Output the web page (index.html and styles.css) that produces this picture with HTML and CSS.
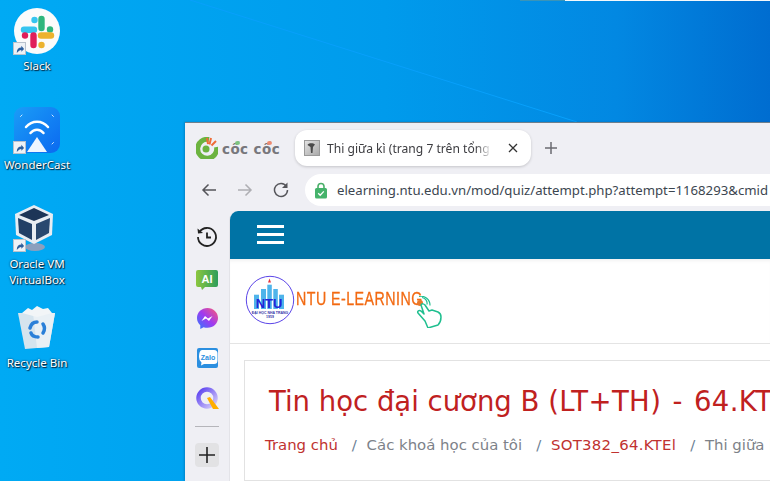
FILE: index.html
```html
<!DOCTYPE html>
<html lang="vi">
<head>
<meta charset="utf-8">
<title>Desktop</title>
<link rel="stylesheet" href="styles.css">
</head>
<body>
<div class="desktop">
  <svg class="rays" viewBox="0 0 770 481" aria-hidden="true">
    <defs>
      <linearGradient id="sky" x1="0" y1="0" x2="1" y2="0">
        <stop offset="0" stop-color="#00aaf4"/><stop offset="0.5" stop-color="#009bec"/><stop offset="0.8" stop-color="#0288e2"/><stop offset="1" stop-color="#006dd0"/>
      </linearGradient>
    </defs>
    <rect width="770" height="481" fill="url(#sky)"/>
    <line x1="190" y1="0" x2="577" y2="122" stroke="#08a0fb" stroke-width="1"/>
    <rect x="520" y="0" width="45" height="1" fill="#3a94b8"/>
    <rect x="565" y="0" width="205" height="1" fill="#f4f8fb"/>
  </svg>

  <div class="icon icon-slack">
    <svg width="46" height="46" viewBox="0 0 46 46">
      <circle cx="23" cy="23" r="23" fill="#fbfbfb"/>
      <g stroke-width="6.400" stroke-linecap="round" fill="none">
        <path d="M10 21.800H20" stroke="#36c5f0"/><path d="M20.500 12v.1" stroke="#36c5f0"/>
        <path d="M27.500 11V20" stroke="#2eb67d"/><path d="M36 21.500v.1" stroke="#2eb67d"/>
        <path d="M27 27.500H37" stroke="#ecb22e"/><path d="M27.500 37v.1" stroke="#ecb22e"/>
        <path d="M19.500 27.500V37" stroke="#e01e5a"/><path d="M11 27.500v.1" stroke="#e01e5a"/>
      </g>
    </svg>
    <span class="shortcut"><svg viewBox="0 0 12 12"><path d="M3 11C3 7 5 5 8 5V3l3 3.500-3 3V7.500C6 7.500 4.500 9 3 11Z" fill="#2d5f9e"/></svg></span>
    <span class="label">Slack</span>
  </div>

  <div class="icon icon-wonder">
    <svg width="46" height="46" viewBox="0 0 46 46">
      <defs><linearGradient id="wc" x1="0" y1="0" x2="1" y2="1"><stop offset="0" stop-color="#1a9df7"/><stop offset="1" stop-color="#0b69f0"/></linearGradient></defs>
      <rect width="46" height="46" rx="9" fill="url(#wc)"/>
      <g fill="none" stroke="#fff" stroke-linecap="round">
        <path d="M12 20C18 13 28 13 34 20" stroke-width="2.500"/>
        <path d="M16.500 26C20 21.500 26 21.500 29.500 26" stroke-width="2.500"/>
        <path d="M8 8l-1.500 1.500M38 8l1.500 1.500M38 37l1.500-1.500" stroke-width="1" opacity=".8"/>
      </g>
      <polygon points="23,30 13,45 33,45" fill="#eef6ff"/>
    </svg>
    <span class="shortcut"><svg viewBox="0 0 12 12"><path d="M3 11C3 7 5 5 8 5V3l3 3.500-3 3V7.500C6 7.500 4.500 9 3 11Z" fill="#2d5f9e"/></svg></span>
    <span class="label">WonderCast</span>
  </div>

  <div class="icon icon-vbox">
    <svg class="vbox-art" width="40" height="46" viewBox="0 0 40 46">
      <ellipse cx="21" cy="42" rx="10" ry="4" fill="#8c9fbd"/>
      <polygon points="20,0 39,9 38,30 20,39 2,30 1,9" fill="#e8edf3"/>
      <polygon points="20,3 35,10 20,16 5,10" fill="#1d3557"/>
      <polygon points="4,13 18,19 18,35 5,28" fill="#223f66"/>
      <polygon points="22,19 36,13 35,28 22,35" fill="#29486f"/>
    </svg>
    <span class="shortcut"><svg viewBox="0 0 12 12"><path d="M3 11C3 7 5 5 8 5V3l3 3.500-3 3V7.500C6 7.500 4.500 9 3 11Z" fill="#2d5f9e"/></svg></span>
    <span class="label">Oracle VM<br>VirtualBox</span>
  </div>

  <div class="icon icon-bin">
    <svg width="40" height="44" viewBox="0 0 40 44">
      <polygon points="1,8 38,8 32,42 8,44" fill="#d5e4ee"/>
      <polygon points="16,8 38,8 32,42 20,43" fill="#e9f0f5"/>
      <path d="M5 8L11 3 15 5 20 1 26 4 31 3 35 8 20 12Z" fill="#f2f5f7"/>
      <g fill="none" stroke="#2a7fd8" stroke-width="3.500" stroke-linecap="round">
        <path d="M13 23C14 19 17 17 20 17"/><path d="M26 19C28 22 28 25 26 28"/><path d="M21 32C18 32 15 31 14 28"/>
      </g>
    </svg>
    <span class="label">Recycle Bin</span>
  </div>

  <section class="browser">
    <header class="tabstrip">
      <div class="brand">
        <svg width="22" height="22" viewBox="0 0 22 22">
          <path d="M13 2.500A9.500 9.500 0 1 0 20.500 10" fill="none" stroke="#6cb33f" stroke-width="5"/>
          <circle cx="10" cy="12" r="3.500" fill="#6cb33f"/>
          <path d="M11 1l1 6M15 1l-1.500 6.500M20 4l-4.500 4.500" stroke="#ef6b36" stroke-width="2"/>
        </svg>
        <span class="brand-name">cốc cốc<i class="mark mark-green"></i><i class="mark mark-red"></i></span>
      </div>
      <div class="tab">
        <svg class="favicon" width="16" height="16" viewBox="0 0 16 16">
          <defs><linearGradient id="fav" x1="0" y1="0" x2="1" y2="1"><stop offset="0" stop-color="#e4e4e4"/><stop offset="1" stop-color="#a8a8a8"/></linearGradient></defs>
          <rect x=".5" y=".5" width="15" height="15" fill="url(#fav)" stroke="#9a9a9a"/>
          <path d="M3.500 5C4 3 9 2.500 11 4.500L9 7 8.500 13H7L6.500 7Z" fill="#4a4a4a"/>
        </svg>
        <span class="tab-title">Thi giữa kì (trang 7 trên tổng</span>
        <svg class="tab-close" width="10" height="10" viewBox="0 0 10 10"><path d="M1 1l8 8M9 1l-8 8" stroke="#333" stroke-width="1.300"/></svg>
      </div>
      <svg class="newtab" width="12" height="12" viewBox="0 0 12 12"><path d="M6 0v12M0 6h12" stroke="#6b6b70" stroke-width="1.500"/></svg>
    </header>

    <nav class="toolbar">
      <svg width="16" height="14" viewBox="0 0 16 14"><path d="M15 7H2M7.500 1.500 2 7l5.500 5.500" fill="none" stroke="#55555a" stroke-width="1.500"/></svg>
      <svg width="16" height="14" viewBox="0 0 16 14"><path d="M1 7h13M8.500 1.500 14 7l-5.500 5.500" fill="none" stroke="#aeaeb3" stroke-width="1.500"/></svg>
      <svg width="16" height="16" viewBox="0 0 16 16"><path d="M13.500 4.500A6.500 6.500 0 1 0 14.500 8" fill="none" stroke="#55555a" stroke-width="1.500"/><path d="M14.500 0.500V6H9Z" fill="#55555a"/></svg>
      <div class="omnibox">
        <svg width="14" height="17" viewBox="0 0 14 17"><path d="M4 7V4.500a3 3 0 0 1 6 0V7" fill="none" stroke="#4caf6a" stroke-width="1.600"/><rect x="1" y="6" width="12" height="10.500" rx="1.500" fill="#45b36b"/><path d="M4.200 11.200l2 2 3.600-3.800" fill="none" stroke="#fff" stroke-width="1.300"/></svg>
        <span class="url">elearning.ntu.edu.vn/mod/quiz/attempt.php?attempt=1168293&amp;cmid</span>
      </div>
    </nav>

    <div class="workspace">
      <aside class="sidebar">
        <div class="slot slot-history"><svg width="22" height="22" viewBox="0 0 22 22"><path d="M3.500 6A9 9 0 1 1 2 11" fill="none" stroke="#222" stroke-width="1.800"/><path d="M1.500 2.500l.5 5 5-.5Z" fill="#222"/><path d="M11 6.500V11.500H15" fill="none" stroke="#222" stroke-width="1.800"/></svg></div>
        <div class="slot slot-ai"><svg width="22" height="20" viewBox="0 0 22 20"><defs><linearGradient id="ai" x1="0" y1="0" x2="1" y2="0"><stop offset="0" stop-color="#8cc63f"/><stop offset="1" stop-color="#2e9e5b"/></linearGradient></defs><path d="M2 0h18a2 2 0 0 1 2 2v13a2 2 0 0 1-2 2H9l-3 3-1-3H2a2 2 0 0 1-2-2V2a2 2 0 0 1 2-2Z" fill="url(#ai)"/><text x="11" y="13" class="ai-text" text-anchor="middle">AI</text></svg></div>
        <div class="slot"><svg width="21" height="21" viewBox="0 0 21 21"><defs><linearGradient id="ms" x1="0" y1="1" x2="1" y2="0"><stop offset="0" stop-color="#2a7cff"/><stop offset=".5" stop-color="#a03af0"/><stop offset="1" stop-color="#ff5c70"/></linearGradient></defs><path d="M10.500 0C4.700 0 0 4.300 0 10c0 3 1.200 5.500 3.300 7.300V21l3.300-1.800c1.200.4 2.500.6 3.900.6 5.800 0 10.500-4.300 10.500-9.800S16.300 0 10.500 0Z" fill="url(#ms)"/><path d="M4.500 13l3.500-5 3 2.500 4.500-2.500-3.500 5-3-2.500Z" fill="#fff"/></svg></div>
        <div class="slot"><svg width="21" height="21" viewBox="0 0 21 21"><rect width="21" height="20" rx="2" fill="#2b8fe0"/><path d="M5 2h12a3.500 3.500 0 0 1 3.500 3.500v7A3.500 3.500 0 0 1 17 16H7l-3 1.500.5-3A7 7 0 0 1 2 9C2 5 3 2 5 2Z" fill="#fff"/><text x="11" y="12" class="zalo-text" text-anchor="middle">Zalo</text></svg></div>
        <div class="slot"><svg width="23" height="23" viewBox="0 0 23 23"><defs><linearGradient id="qc" x1="0" y1="0" x2="1" y2="1"><stop offset="0" stop-color="#5a3ff0"/><stop offset="1" stop-color="#d8d0fa"/></linearGradient></defs><circle cx="11" cy="11" r="8.500" fill="none" stroke="url(#qc)" stroke-width="4.500"/><polygon points="11,11 14,10 23,22 17,22" fill="#ffae00"/></svg></div>
        <div class="side-rule"></div>
        <div class="side-add"><svg width="16" height="16" viewBox="0 0 16 16"><path d="M8 0v16M0 8h16" stroke="#222" stroke-width="1.600"/></svg></div>
      </aside>

      <main class="page">
        <div class="navbar">
          <div class="hamburger"><i></i><i></i><i></i></div>
        </div>
        <div class="logobar">
          <svg class="ntu" width="50" height="50" viewBox="0 0 50 50">
            <circle cx="25" cy="25" r="23.700" fill="#fff" stroke="#5b45e8" stroke-width="1"/>
            <polygon points="24.500,3.500 26,7.500 23,7.500" fill="#e6343a"/>
            <rect x="9" y="19.700" width="5" height="14.300" fill="#4fb4ea"/>
            <rect x="16" y="14" width="5" height="20" fill="#4fb4ea"/>
            <rect x="22.300" y="9.700" width="4.500" height="24.300" fill="#4fb4ea"/>
            <rect x="28.300" y="14" width="4.500" height="20" fill="#4fb4ea"/>
            <rect x="34" y="19.700" width="5" height="14.300" fill="#4fb4ea"/>
            <text x="24" y="33" class="ntu-text" text-anchor="middle">NTU</text>
            <text x="25" y="38.500" class="ntu-sub" text-anchor="middle">ĐẠI HỌC NHA TRANG</text>
            <text x="25" y="43" class="ntu-sub" text-anchor="middle">1959</text>
          </svg>
          <span class="logo-text">NTU E-LEARNING</span>
          <svg class="hand" width="28" height="32" viewBox="0 0 28 32">
            <path d="M6 1.500a6 6 0 0 1 5 7M3 .5a9 9 0 0 1 11 9" fill="none" stroke="#1fbf8f" stroke-width="1.200"/>
            <circle cx="4" cy="7" r="3" fill="#e9792b"/>
            <path d="M5 9c1-2 3-1 4 0l4 6 3-1 3 1 3 1c2 1 3 3 3 5 0 4-2 7-3 8l-10 3L9 25 2 17c-1-2 1-3 3-2l3 3Z" fill="#fff" stroke="#1fbf8f" stroke-width="1.500" stroke-linejoin="round"/>
          </svg>
        </div>
        <div class="content">
          <div class="card">
            <h1 class="course">Tin học đại cương B <span class="course-tail">(LT+TH) - 64.KTEL</span></h1>
            <div class="crumbs">
              <a class="link">Trang chủ</a><span class="sep">/</span>
              <span class="muted">Các khoá học của tôi</span><span class="sep">/</span>
              <a class="link link-code">SOT382_64.KTEl</a><span class="sep">/</span>
              <span class="muted">Thi giữa kì</span>
            </div>
          </div>
        </div>
      </main>
    </div>
  </section>
</div>
</body>
</html>
```
FILE: styles.css
```css
* { box-sizing: border-box; }
html, body { margin: 0; padding: 0; width: 770px; height: 481px; overflow: hidden; }
body { font-family: "Open Sans", "DejaVu Sans", sans-serif; }

.desktop { position: relative; width: 770px; height: 481px; overflow: hidden; background: #019ae8; }
.rays { position: absolute; left: 0; top: 0; width: 770px; height: 481px; }

.icon { position: absolute; width: 74px; display: flex; flex-direction: column; align-items: center; }
.icon-slack { left: 0; top: 8px; }
.icon-wonder { left: 0; top: 107px; }
.icon-vbox { left: 0; top: 205px; }
.icon-bin { left: 0; top: 305px; }
.icon > svg { display: block; }
.vbox-art { margin-left: -7px; }
.shortcut { position: absolute; left: 13px; top: 34px; width: 13px; height: 13px; background: #eef2f6; border: 1px solid #b9c2cc; }
.shortcut svg { display: block; width: 11px; height: 11px; }
.label { color: #fff; font-family: "Noto Sans", Arial, sans-serif; font-size: 11.500px; line-height: 16px; text-align: center; text-shadow: 1px 1px 1px #00243f, 0 0 2px #00243f; white-space: nowrap; }
.icon-slack .label { margin-top: 4px; }
.icon-wonder .label { margin-top: 4px; }
.icon-vbox .label { margin-top: 5px; }
.icon-bin .label { margin-top: 6px; }

.browser { position: absolute; left: 185px; top: 122px; width: 585px; height: 359px; background: #efeff4; border-top: 1px solid #6e7f8c; display: flex; flex-direction: column; box-shadow: -1px 0 2px rgba(0,40,80,.25); }
.tabstrip { height: 44px; display: flex; align-items: center; flex: none; padding: 7px 0 1px; }
.brand { width: 110px; display: flex; align-items: center; gap: 4px; padding-left: 11px; }
.brand-name { position: relative; font-family: "DejaVu Sans", sans-serif; font-weight: 700; font-size: 13.500px; color: #77777c; white-space: nowrap; letter-spacing: .4px; margin-top: 2px; }
.mark { position: absolute; top: 0; width: 5px; height: 4px; border-radius: 50%; }
.mark-green { left: 13px; background: #7cc47f; }
.mark-red { left: 45px; background: #ef8a70; }
.tab { width: 236px; height: 36px; background: #fff; border-radius: 12px; display: flex; align-items: center; padding-left: 9px; box-shadow: 0 1px 3px rgba(0,0,0,.18); }
.tab-title { margin-left: 7px; width: 165px; font-family: "Noto Sans", sans-serif; font-size: 12.100px; color: #3c3c40; white-space: nowrap; overflow: hidden; -webkit-mask-image: linear-gradient(90deg, #000 90%, transparent); mask-image: linear-gradient(90deg, #000 90%, transparent); }
.tab-close { margin-left: 16px; }
.newtab { margin-left: 14px; }

.toolbar { height: 44px; display: flex; align-items: center; flex: none; padding: 2px 0 0 16px; }
.toolbar > svg { margin-right: 20px; flex: none; }
.toolbar > svg:nth-child(3) { margin-right: 16px; }
.omnibox { flex: 1; height: 32px; background: #fff; border-radius: 16px 0 0 16px; display: flex; align-items: center; padding-left: 9px; gap: 9px; overflow: hidden; min-width: 0; }
.url { font-family: "Noto Sans", sans-serif; font-size: 13.200px; color: #3c4650; white-space: nowrap; }

.workspace { flex: 1; display: flex; min-height: 0; }
.sidebar { width: 44px; flex: none; display: flex; flex-direction: column; align-items: center; padding-top: 7px; }
.slot { height: 40px; display: flex; align-items: center; justify-content: center; flex: none; }
.slot svg { display: block; }
.slot-history { padding-bottom: 2px; }
.slot-ai { padding-top: 3px; }
.side-rule { width: 24px; height: 1px; background: #b5b5ba; margin-top: 8px; flex: none; }
.side-add { width: 24px; height: 24px; border-radius: 4px; background: #e2e2e4; display: flex; align-items: center; justify-content: center; margin-top: 16px; flex: none; }
.ai-text { font-family: "Liberation Sans", sans-serif; font-weight: 700; font-size: 11px; fill: #fff; }
.zalo-text { font-family: "Liberation Sans", sans-serif; font-weight: 700; font-size: 7px; fill: #2b8fe0; }

.page { flex: 1; min-width: 0; background: #fff; border-top-left-radius: 9px; border-left: 1px solid #e3e3e8; overflow: hidden; display: flex; flex-direction: column; }
.navbar { height: 48px; flex: none; background: #0073a5; display: flex; align-items: center; padding: 0 0 1px 27px; }
.hamburger { width: 27px; display: flex; flex-direction: column; gap: 5px; }
.hamburger i { display: block; height: 3px; background: #fff; }
.logobar { height: 85px; flex: none; border-bottom: 1px solid #e4e4e4; display: flex; align-items: center; padding-left: 15px; box-shadow: inset 0 4px 4px -3px rgba(0,0,0,.08); position: relative; }
.ntu { flex: none; margin-top: -2px; }
.ntu-text { font-family: "Liberation Sans", sans-serif; font-weight: 700; font-size: 13px; fill: #2323d8; }
.ntu-sub { font-family: "Liberation Sans", sans-serif; font-weight: 700; font-size: 3.500px; fill: #3535a8; }
.logo-text { margin-left: 1px; margin-top: -4px; font-family: "Liberation Sans", sans-serif; font-size: 18px; line-height: 20px; color: #f26a12; letter-spacing: .6px; white-space: nowrap; -webkit-text-stroke: .3px #f26a12; transform: scaleX(.79); transform-origin: left center; }
.hand { position: absolute; left: 186px; top: 37px; }
.content { padding: 16px 0 0 14px; }
.card { width: 560px; height: 121px; border: 1px solid #e2e2e2; padding: 21px 0 0 24px; overflow: hidden; }
.course { margin: 0; font-family: "DejaVu Sans", sans-serif; font-weight: 400; font-size: 27.500px; line-height: 38px; color: #c0211f; white-space: nowrap; }
.course-tail { letter-spacing: .4px; word-spacing: 2px; }
.crumbs { margin-top: 15px; margin-left: -4px; font-family: "DejaVu Sans", sans-serif; font-size: 14.900px; line-height: 20px; white-space: nowrap; }
.link { color: #c0322f; }
.link-code { letter-spacing: .3px; }
.muted { color: #7d8289; }
.sep { color: #6c7f96; margin: 0 5px 0 14px; }
```
